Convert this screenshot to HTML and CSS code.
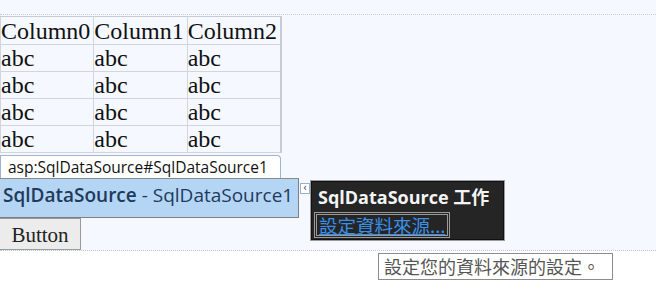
FILE: index.html
```html
<!DOCTYPE html>
<html lang="zh-Hant">
<head>
    <meta charset="UTF-8">
    <title>Designer</title>
    <link rel="stylesheet" href="styles.css">
</head>
<body>

    <div class="surface">
        <div class="form-area">
            <table class="grid">
                <tr><td>Column0</td><td>Column1</td><td>Column2</td></tr>
                <tr><td>abc</td><td>abc</td><td>abc</td></tr>
                <tr><td>abc</td><td>abc</td><td>abc</td></tr>
                <tr><td>abc</td><td>abc</td><td>abc</td></tr>
                <tr><td>abc</td><td>abc</td><td>abc</td></tr>
            </table>

            <div class="tag-label">asp:SqlDataSource#SqlDataSource1</div>
            <div class="control">
                <b>SqlDataSource</b> - SqlDataSource1
            </div>
            <button class="btn">Button</button>

            <span class="glyph">&lsaquo;</span>
            <div class="tasks">
                <div class="tasks-title">SqlDataSource 工作</div>
                <a class="tasks-link" href="#">設定資料來源...</a>
            </div>
        </div>
    </div>

    <div class="tip">設定您的資料來源的設定。</div>

</body>
</html>
```

FILE: styles.css
```css
*{
    margin: 0;
    padding: 0;
    box-sizing: border-box;
}

body{
    background-color: white;
    font-family: "Liberation Serif", "Noto Sans CJK TC", serif;
    position: relative;
    height: 300px;
    overflow: hidden;
}

.surface{
    background-color: #f5f9ff;
    padding-top: 14px;
    height: 251px;
    border-bottom: 1px dotted #bcc8d8;
}

.form-area{
    position: relative;
    border-top: 1px dotted #c4ccd8;
    padding-top: 1px;
}

.grid{
    border-collapse: collapse;
    background-color: #f5f9ff;
    font-size: 24px;
    color: #111;
}

.grid td{
    border: 1px solid #d2d6dc;
    padding: 0 3px 0 0;
    height: 27px;
    line-height: 26px;
}

.grid tr:first-child td{
    border-top-color: #c8ccd2;
    height: 28px;
}

.grid td:last-child{
    border-right: 2px solid #c8ccd2;
}

.tag-label{
    display: inline-block;
    margin-top: 2px;
    width: 281px;
    height: 23px;
    padding-left: 7px;
    background-color: white;
    border: 1px solid #9fb3d3;
    border-bottom: none;
    border-radius: 0 4px 0 0;
    font-family: "Open Sans", "Noto Sans", sans-serif;
    font-size: 15.5px;
    line-height: 22px;
    color: #111;
    white-space: nowrap;
}

.control{
    width: 299px;
    height: 40px;
    background-color: #b5d5f5;
    border: 1px solid #7f7f7f;
    border-left: none;
    border-top-color: #8a8a8a;
    padding: 3px 0 0 3px;
    font-family: "Open Sans", "Noto Sans", sans-serif;
    font-size: 19px;
    color: #1e3b5c;
    white-space: nowrap;
}

.control b{
    font-weight: 600;
}

.btn{
    display: block;
    margin-top: 0;
    width: 81px;
    height: 32px;
    background-color: #ececec;
    border: 1px solid #9a9a9a;
    border-left: none;
    padding-top: 2px;
    font-family: "Liberation Serif", serif;
    font-size: 21px;
    color: #222;
}

.glyph{
    position: absolute;
    left: 300px;
    top: 168px;
    width: 10px;
    height: 11px;
    background-color: white;
    border: 1px solid #9ab0d0;
    font-family: "DejaVu Sans", sans-serif;
    font-size: 10px;
    line-height: 8px;
    text-align: center;
    color: #333;
}

.tasks{
    position: absolute;
    left: 310px;
    top: 165px;
    width: 195px;
    height: 61px;
    background-color: #252526;
    border: 1px solid #9c9c9c;
    box-shadow: inset 0 0 0 1px #111;
    padding: 3px 0 0 3px;
}

.tasks-title{
    font-family: "Open Sans", "Noto Sans CJK TC", sans-serif;
    font-weight: 700;
    font-size: 18px;
    line-height: 26px;
    color: #f4f4f4;
    padding-left: 4px;
    white-space: nowrap;
}

.tasks-link{
    display: inline-block;
    margin-top: 2px;
    padding: 0 2px;
    border: 3px double #9a9a9a;
    font-family: "Noto Sans CJK TC", sans-serif;
    font-size: 18.5px;
    line-height: 20px;
    color: #3a8fe6;
    white-space: nowrap;
}

.tip{
    position: absolute;
    left: 378px;
    top: 253px;
    width: 235px;
    height: 27px;
    background-color: white;
    border: 1px solid #8c8c8c;
    padding-left: 5px;
    font-family: "Noto Sans CJK TC", sans-serif;
    font-size: 18px;
    line-height: 25px;
    color: #555;
    white-space: nowrap;
}
```
